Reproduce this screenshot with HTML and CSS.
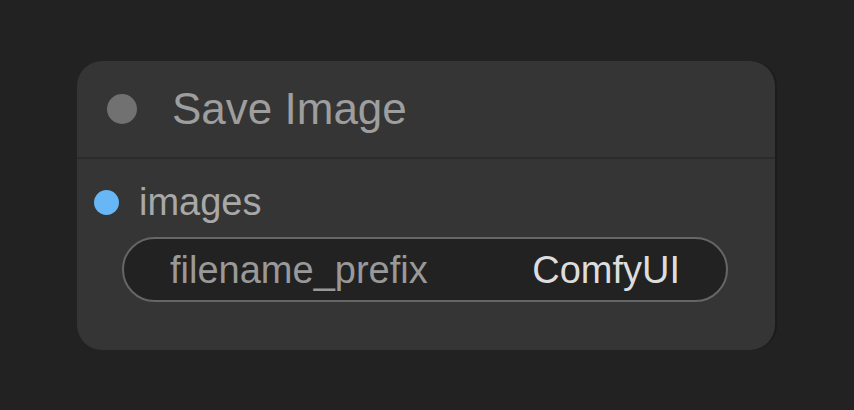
FILE: index.html
```html
<!DOCTYPE html>
<html>
<head>
<meta charset="utf-8">
<link rel="stylesheet" href="styles.css">
</head>
<body>
<div class="node">
  <div class="title">
    <span class="title-dot"></span>
    <span class="title-text">Save Image</span>
  </div>
  <div class="body">
    <div class="input-row">
      <span class="slot-dot"></span>
      <span class="slot-label">images</span>
    </div>
    <div class="widget">
      <span class="widget-name">filename_prefix</span>
      <span class="widget-value">ComfyUI</span>
    </div>
  </div>
</div>
</body>
</html>
```
FILE: styles.css
```css
html, body {
  margin: 0;
  padding: 0;
  background: #222222;
  font-family: "Liberation Sans", Arial, sans-serif;
}
body {
  padding: 61px 0 0 77px;
  height: 410px;
  box-sizing: border-box;
}
.node {
  width: 698px;
  height: 289px;
  background: #353535;
  border-radius: 25px;
  box-shadow: 2px 0 0 #1c1c1c;
  box-sizing: border-box;
  display: flex;
  flex-direction: column;
}
.title {
  height: 96px;
  display: flex;
  align-items: center;
  padding-left: 30px;
  border-bottom: 2px solid #2b2b2b;
}
.title-dot {
  width: 30px;
  height: 30px;
  border-radius: 50%;
  background: #717171;
  flex: none;
}
.title-text {
  margin-left: 35px;
  font-size: 44px;
  line-height: 50px;
  color: #9e9e9e;
}
.body {
  padding: 21px 0 0 0;
}
.input-row {
  display: flex;
  align-items: center;
  padding-left: 17px;
  height: 44px;
}
.slot-dot {
  width: 25px;
  height: 25px;
  border-radius: 50%;
  background: #67b6f6;
  flex: none;
}
.slot-label {
  margin-left: 20px;
  font-size: 38px;
  line-height: 44px;
  color: #a8a8a8;
}
.widget {
  margin: 13px 0 0 45px;
  width: 606px;
  height: 65px;
  box-sizing: border-box;
  border: 2px solid #666666;
  border-radius: 33px;
  background: #222222;
  display: flex;
  align-items: center;
  justify-content: space-between;
  padding: 0 46px 0 46px;
}
.widget-name {
  font-size: 38px;
  line-height: 44px;
  color: #999999;
}
.widget-value {
  font-size: 38px;
  line-height: 44px;
  color: #dddddd;
}
```
